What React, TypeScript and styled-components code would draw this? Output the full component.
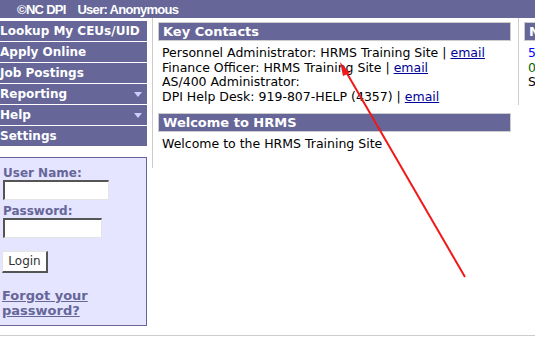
import React from "react";
import styled, { createGlobalStyle } from "styled-components";

const Global = createGlobalStyle`
  html, body {
    margin: 0;
    padding: 0;
    background: #fff;
  }
  body {
    font-family: "DejaVu Sans", Verdana, sans-serif;
    font-size: 12px;
    color: #000;
    width: 535px;
    height: 337px;
    overflow: hidden;
    position: relative;
  }
`;

const purple = "#666699";

const TopBar = styled.div`
  height: 18px;
  background: ${purple};
  color: #fff;
  font-family: "Liberation Sans", Arial, sans-serif;
  font-weight: bold;
  font-size: 13px;
  line-height: 19px;
  padding-left: 17px;
  letter-spacing: -0.7px;
  white-space: pre;
`;

const Page = styled.div`
  display: flex;
  align-items: flex-start;
  height: 317px;
  border-bottom: 1px solid #cccccc;
  overflow: hidden;
`;

const Sidebar = styled.div`
  width: 147px;
  flex: none;
  padding-top: 3px;
`;

const MenuItem = styled.div`
  height: 20px;
  margin-bottom: 1px;
  background: ${purple};
  color: #fff;
  font-weight: bold;
  font-size: 12px;
  line-height: 21px;
  display: flex;
  justify-content: space-between;
  align-items: center;
  padding-right: 5px;
`;

const Caret = styled.span`
  width: 0;
  height: 0;
  border-left: 4px solid transparent;
  border-right: 4px solid transparent;
  border-top: 5px solid #ccccff;
`;

const LoginBox = styled.div`
  margin-top: 11px;
  height: 169px;
  background: #e5e5ff;
  border: 1px solid ${purple};
  border-left: none;
  padding: 8px 0 0 2px;
  box-sizing: border-box;
  color: ${purple};
  font-weight: bold;
  font-size: 12px;
`;

const Label = styled.div`
  line-height: 14px;
  margin-left: 1px;
`;

const TextInput = styled.div<{ $w: number }>`
  width: ${(p) => p.$w}px;
  height: 20px;
  box-sizing: border-box;
  background: #fff;
  border-style: solid;
  border-width: 2px 1px 1px 2px;
  border-color: #555555 #e4e4e4 #e4e4e4 #555555;
  margin: 0 0 4px 1px;
`;

const Button = styled.div`
  margin-top: 13px;
  width: 46px;
  height: 22px;
  box-sizing: border-box;
  border-style: solid;
  border-width: 1px 2px 2px 1px;
  border-color: #e4e4e4 #555555 #555555 #e4e4e4;
  background: #fff;
  color: #333;
  font-weight: normal;
  font-size: 12px;
  line-height: 19px;
  text-align: center;
`;

const Forgot = styled.a`
  display: block;
  margin-top: 15px;
  color: ${purple};
  font-weight: bold;
  font-size: 13px;
  line-height: 15px;
  text-decoration: underline;
`;

const Main = styled.div`
  width: 366px;
  flex: none;
  margin-left: 5px;
  border-left: 1px solid #cccccc;
  padding: 4px 7px 8px 5px;
  box-sizing: border-box;
`;

const Side = styled.div`
  flex: 1;
  border-left: 1px solid #cccccc;
  padding: 4px 0 7px 5px;
`;

const Header = styled.div`
  height: 19px;
  box-sizing: border-box;
  background: ${purple};
  border: 1px solid #cccccc;
  color: #fff;
  font-weight: bold;
  font-size: 13px;
  line-height: 17px;
  padding-left: 4px;
  white-space: nowrap;
  overflow: hidden;
`;

const Body = styled.div`
  padding: 5px 0 0 4px;
  font-size: 12.5px;
  line-height: 14.7px;
  margin-bottom: 8px;
  white-space: nowrap;
  overflow: hidden;
`;

const Link = styled.a`
  color: #000099;
  text-decoration: underline;
`;

const Colored = styled.div<{ $c: string }>`
  color: ${(p) => p.$c};
`;

const Arrow = styled.svg`
  position: absolute;
  left: 0;
  top: 0;
  pointer-events: none;
`;

export default function App() {
  return (
    <>
      <Global />
      <TopBar>{"©NC DPI    User: Anonymous"}</TopBar>
      <Page>
        <Sidebar>
          <MenuItem>Lookup My CEUs/UID</MenuItem>
          <MenuItem>Apply Online</MenuItem>
          <MenuItem>Job Postings</MenuItem>
          <MenuItem>
            Reporting <Caret />
          </MenuItem>
          <MenuItem>
            Help <Caret />
          </MenuItem>
          <MenuItem>Settings</MenuItem>
          <LoginBox>
            <Label>User Name:</Label>
            <TextInput $w={106} />
            <Label>Password:</Label>
            <TextInput $w={99} />
            <Button>Login</Button>
            <Forgot>
              Forgot your
              <br />
              password?
            </Forgot>
          </LoginBox>
        </Sidebar>
        <Main>
          <Header>Key Contacts</Header>
          <Body>
            Personnel Administrator: HRMS Training Site | <Link>email</Link>
            <br />
            Finance Officer: HRMS Training Site | <Link>email</Link>
            <br />
            AS/400 Administrator:
            <br />
            DPI Help Desk: 919-807-HELP (4357) | <Link>email</Link>
          </Body>
          <Header>Welcome to HRMS</Header>
          <Body>Welcome to the HRMS Training Site</Body>
        </Main>
        <Side>
          <Header>News</Header>
          <Body>
            <Colored $c="#0000ff">5</Colored>
            <Colored $c="#006600">0</Colored>
            <Colored $c="#000">S</Colored>
          </Body>
        </Side>
      </Page>
      <Arrow width="535" height="337">
        <line x1="465" y1="277" x2="345" y2="70" stroke="#f01818" strokeWidth="2" />
        <polygon points="340,62 350,73 343,76" fill="#f01818" />
      </Arrow>
    </>
  );
}
